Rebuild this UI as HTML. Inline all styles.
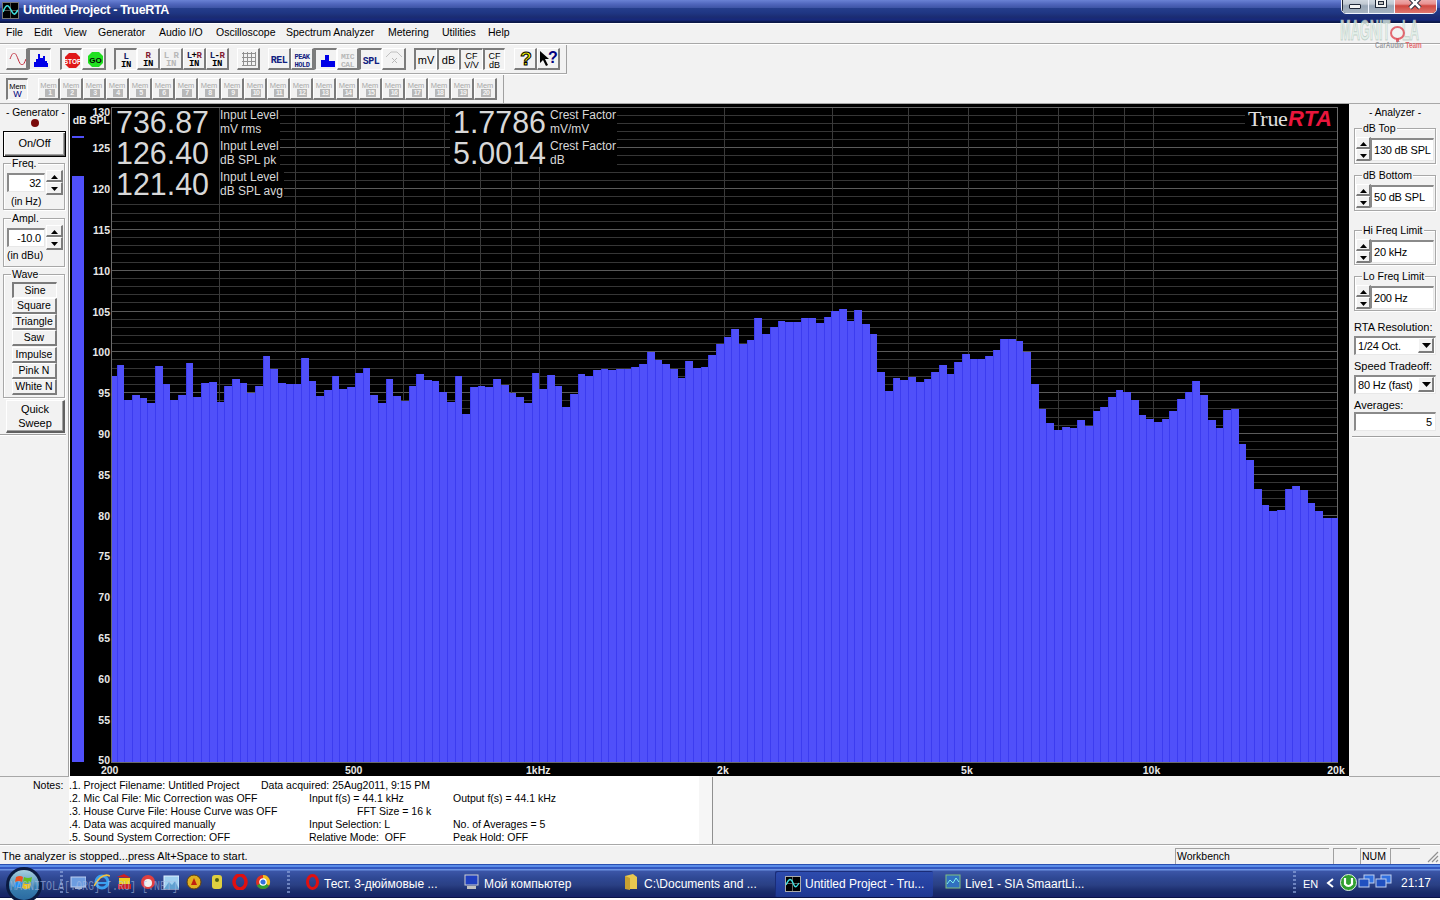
<!DOCTYPE html>
<html><head><meta charset="utf-8">
<style>
*{margin:0;padding:0;box-sizing:border-box}
html,body{width:1440px;height:900px;overflow:hidden;background:#f2f2f2;font-family:"Liberation Sans",sans-serif;font-size:11px;color:#000;position:relative}
.a{position:absolute;white-space:nowrap}
#title{left:0;top:0;width:1440px;height:23px;background:linear-gradient(#6a82d4 0px,#5066bc 4px,#3d54a4 8px,#253e8c 8px,#1f3683 13px,#1b2c72 17px,#16287c 20px,#0c1848 22px,#0c1848 23px)}
#title .t{left:23px;top:3px;color:#fff;font-weight:bold;font-size:12.5px;letter-spacing:-0.33px}
.menu{top:26px;font-size:10.5px}
.hl{position:absolute;height:1px;background:#a0a0a0}
.vl{position:absolute;width:1px;background:#a0a0a0}
.b{position:absolute;box-sizing:border-box;background:#f2f2f2;border-top:1px solid #fff;border-left:1px solid #fff;border-right:2px solid #7c7c7c;border-bottom:2px solid #7c7c7c;text-align:center;overflow:hidden}
.b.d{border-top:2px solid #7c7c7c;border-left:2px solid #7c7c7c;border-right:1px solid #fff;border-bottom:1px solid #fff}
.tb{font-family:"Liberation Mono",monospace;font-weight:bold;font-size:9px;line-height:8px;letter-spacing:-0.5px}
.mem{color:#b4b4b4;font-size:9px;line-height:9px;font-family:"Liberation Sans",sans-serif}
.mem .n{display:inline-block;border:1px solid #b4b4b4;font-size:8px;line-height:7px;padding:0 1px;margin-top:1px;font-weight:bold}
.yl{position:absolute;left:80px;width:30px;text-align:right;color:#e8e8e8;font-weight:bold;font-size:10.5px;line-height:12px}
.xl{position:absolute;top:764px;width:60px;text-align:center;color:#e8e8e8;font-weight:bold;font-size:10.5px;line-height:12px}
.big{position:absolute;color:#d8d8d8;font-size:31px;line-height:30px;transform:scaleX(0.98);transform-origin:left top}
.sm{position:absolute;color:#d8d8d8;font-size:12px;line-height:14px;background:#000;padding-right:1px;padding-bottom:2px}

.grp{position:absolute;border:1px solid #a8a8a8;box-shadow:inset 1px 1px 0 #fff,1px 1px 0 #fff}
.glab{position:absolute;background:#f2f2f2;padding:0 1px;font-size:10.5px;line-height:12px}
.edit{position:absolute;white-space:nowrap;overflow:hidden;background:#fff;border-top:2px solid #8a8a8a;border-left:2px solid #8a8a8a;border-bottom:1px solid #e8e8e8;border-right:1px solid #e8e8e8;font-size:11px;letter-spacing:-0.2px;line-height:16px;padding:0 3px}
.spin{position:absolute;background:#f2f2f2}
.wb{position:absolute;left:12px;width:45px;height:16px;font-size:10.5px;line-height:13px;text-align:center;background:#f2f2f2;border-top:1px solid #fff;border-left:1px solid #fff;border-right:2px solid #7c7c7c;border-bottom:2px solid #7c7c7c}
.wb.d{border-top:2px solid #7c7c7c;border-left:2px solid #7c7c7c;border-right:1px solid #fff;border-bottom:1px solid #fff}
.note{position:absolute;font-size:10.5px;line-height:13px}
#task{left:0;top:864px;width:1440px;height:34px;background:linear-gradient(#2a50b0 0px,#2a50b0 1px,#5a8ce8 1px,#5a8ce8 3.5px,#3358c0 3.5px,#3358c0 5px,#6a90e0 5px,#6a90e0 6px,#3c56a8 7px,#2f4894 14px,#2a4084 21px,#1e3070 26px,#172a68 29px,#182268 33px,#0a1448 33px,#0a1448 34px)}
.tt{position:absolute;color:#fff;font-size:12px;top:876.5px}
</style></head><body>
<!-- TITLE BAR -->
<div class="a" id="title">
 <div class="a" style="left:2px;top:2px;width:17px;height:17px;background:#000;border:1px solid #777">
  <div class="a" style="left:7px;top:0;width:1px;height:15px;background:#555"></div>
  <div class="a" style="left:0;top:7px;width:15px;height:1px;background:#555"></div>
  <svg class="a" style="left:0;top:0" width="15" height="15"><path d="M0,9 C3,1 5,1 8,7 S12,12 15,7" stroke="#40e0e0" stroke-width="1.6" fill="none"/></svg>
 </div>
 <div class="a t">Untitled Project - TrueRTA</div>
 <!-- caption buttons -->
 <div class="a" style="left:1341px;top:-3px;width:96px;height:17px;border:1px solid #f0f4ff;border-radius:0 0 5px 5px;background:#1a2030;overflow:hidden">
  <div class="a" style="left:1px;top:0;width:25px;height:15px;background:linear-gradient(#d8e0e8 0%,#c0c8d2 40%,#98a6b6 52%,#a8b4c2 100%)"></div>
  <div class="a" style="left:27px;top:0;width:25px;height:15px;background:linear-gradient(#d8e0e8 0%,#c0c8d2 40%,#98a6b6 52%,#a8b4c2 100%)"></div>
  <div class="a" style="left:26px;top:0;width:1px;height:15px;background:#f0f4ff"></div>
  <div class="a" style="left:52px;top:0;width:1px;height:15px;background:#f0f4ff"></div>
  <div class="a" style="left:53px;top:0;width:41px;height:15px;background:linear-gradient(#f0b8b8 0%,#e89090 40%,#d04840 52%,#e07870 100%)"></div>
  <div class="a" style="left:7px;top:6px;width:12px;height:5px;border:1px solid #202838;background:#f4f4f4;border-radius:1px"></div>
  <div class="a" style="left:33px;top:0px;width:12px;height:10px;border:1px solid #202838;background:#f4f4f4"><div class="a" style="left:2px;top:2px;width:6px;height:4px;border:1px solid #202838;background:#c0c0c0"></div></div>
  <svg class="a" style="left:65px;top:0" width="16" height="12"><path d="M3,0 L13,10 M13,0 L3,10" stroke="#202838" stroke-width="4.5"/><path d="M3,0 L13,10 M13,0 L3,10" stroke="#fff" stroke-width="2.5"/></svg>
 </div>
</div>
<!-- MENU -->
<div class="a menu" style="left:6px">File</div>
<div class="a menu" style="left:34px">Edit</div>
<div class="a menu" style="left:64px">View</div>
<div class="a menu" style="left:98px">Generator</div>
<div class="a menu" style="left:159px">Audio I/O</div>
<div class="a menu" style="left:216px">Oscilloscope</div>
<div class="a menu" style="left:286px">Spectrum Analyzer</div>
<div class="a menu" style="left:388px">Metering</div>
<div class="a menu" style="left:442px">Utilities</div>
<div class="a menu" style="left:488px">Help</div>
<div class="hl" style="left:0;top:23px;width:1440px;background:#fff"></div>
<div class="hl" style="left:0;top:43px;width:1440px;background:#a8a8a8"></div>
<div class="hl" style="left:0;top:44px;width:1440px;background:#fff"></div>
<!-- watermark logo -->
<div class="a" style="left:1340px;top:15px;font-size:29px;line-height:30px;font-weight:bold;color:rgba(225,240,232,0.8);-webkit-text-stroke:1px rgba(160,180,170,0.55);transform:scaleX(0.44);transform-origin:left top">MAGNIT</div>
<div class="a" style="left:1402px;top:15px;font-size:29px;line-height:30px;font-weight:bold;color:rgba(225,240,232,0.8);-webkit-text-stroke:1px rgba(160,180,170,0.55);transform:scaleX(0.44);transform-origin:left top">LA</div>
<div class="a" style="left:1390px;top:26px;width:15px;height:14px;border:2px solid rgba(225,80,90,0.85);border-radius:50%"></div>
<div class="a" style="left:1396px;top:38px;width:3px;height:4px;background:rgba(225,80,90,0.85)"></div>
<div class="a" style="left:1375px;top:41px;font-size:8.5px;line-height:9px;font-weight:bold;color:rgba(140,140,145,0.85);transform:scaleX(0.75);transform-origin:left top">CarAudio <span style="color:rgba(225,90,95,0.9)">Team</span></div>
<div class="b" style="left:6px;top:48px;width:22px;height:22px"><svg style="position:absolute;left:2px;top:4px" width="18" height="12"><path d="M1,6 C4,-2 6,-2 9,6 S14,14 17,6" stroke="#c02838" stroke-width="1" fill="none"/></svg></div>
<div class="b d" style="left:28px;top:48px;width:23px;height:22px"><svg style="position:absolute;left:2px;top:3px" width="18" height="15"><path d="M2,14 L2,9 L4,9 L4,6 L6,6 L6,1 L8,1 L8,5 L11,5 L11,3 L13,3 L13,8 L15,8 L15,10 L16,10 L16,14 Z" fill="#0000e8"/></svg></div>
<div class="b d" style="left:60px;top:48px;width:22px;height:22px"><svg style="position:absolute;left:2px;top:2px" width="17" height="17"><path d="M5,1 L12,1 L16,5 L16,12 L12,16 L5,16 L1,12 L1,5 Z" fill="#e01818"/><text x="8.5" y="11.5" text-anchor="middle" font-size="6.5" font-weight="bold" fill="#fff" font-family="Liberation Sans">STOP</text></svg></div>
<div class="b" style="left:82px;top:48px;width:24px;height:22px"><svg style="position:absolute;left:4px;top:2px" width="17" height="17"><path d="M5,1 L12,1 L16,5 L16,12 L12,16 L5,16 L1,12 L1,5 Z" fill="#20e020"/><text x="8.5" y="12" text-anchor="middle" font-size="8" font-weight="bold" fill="#000" font-family="Liberation Sans">GO</text></svg></div>
<div class="b d" style="left:114px;top:48px;width:23px;height:22px"><div class="tb" style="position:absolute;left:0;right:0;top:3px;color:#102060">L</div><div class="tb" style="position:absolute;left:0;right:0;top:11px;color:#000">IN</div></div>
<div class="b" style="left:137px;top:48px;width:23px;height:22px"><div class="tb" style="position:absolute;left:0;right:0;top:3px;color:#801830">R</div><div class="tb" style="position:absolute;left:0;right:0;top:11px;color:#000">IN</div></div>
<div class="b" style="left:160px;top:48px;width:23px;height:22px"><div class="tb" style="position:absolute;left:0;right:0;top:3px;color:#b8b8b8">L&nbsp;R</div><div class="tb" style="position:absolute;left:0;right:0;top:11px;color:#b8b8b8">IN</div></div>
<div class="b" style="left:183px;top:48px;width:23px;height:22px"><div class="tb" style="position:absolute;left:0;right:0;top:3px;color:#000"><span style="color:#102060">L</span>+<span style="color:#801830">R</span></div><div class="tb" style="position:absolute;left:0;right:0;top:11px;color:#000">IN</div></div>
<div class="b" style="left:206px;top:48px;width:23px;height:22px"><div class="tb" style="position:absolute;left:0;right:0;top:3px;color:#000"><span style="color:#102060">L</span>-<span style="color:#801830">R</span></div><div class="tb" style="position:absolute;left:0;right:0;top:11px;color:#000">IN</div></div>
<div class="b" style="left:237px;top:48px;width:23px;height:22px"><svg style="position:absolute;left:3px;top:2px" width="16" height="16"><line x1="2.5" y1="1" x2="2.5" y2="15" stroke="#909090"/><line x1="1" y1="2.5" x2="15" y2="2.5" stroke="#909090"/><line x1="6.5" y1="1" x2="6.5" y2="15" stroke="#909090"/><line x1="1" y1="6.5" x2="15" y2="6.5" stroke="#909090"/><line x1="10.5" y1="1" x2="10.5" y2="15" stroke="#909090"/><line x1="1" y1="10.5" x2="15" y2="10.5" stroke="#909090"/><line x1="14.5" y1="1" x2="14.5" y2="15" stroke="#909090"/><line x1="1" y1="14.5" x2="15" y2="14.5" stroke="#909090"/></svg></div>
<div class="b" style="left:268px;top:48px;width:23px;height:22px"><div class="tb" style="position:absolute;left:0;right:0;top:7px;color:#102080;font-size:10px;line-height:10px">REL</div></div>
<div class="b" style="left:291px;top:48px;width:23px;height:22px"><div class="tb" style="position:absolute;left:0;right:0;top:4px;color:#102080;font-size:7px;line-height:8px">PEAK<br>HOLD</div></div>
<div class="b d" style="left:314px;top:48px;width:23px;height:22px"><svg style="position:absolute;left:2px;top:4px" width="18" height="14"><path d="M3,13 L3,6 L7,6 L7,1 L11,1 L11,7 L17,7 L17,13 Z" fill="#0000e8"/></svg></div>
<div class="b" style="left:337px;top:48px;width:22px;height:22px"><div class="tb" style="position:absolute;left:0;right:0;top:4px;color:#b8b8b8;font-size:8px;line-height:8px">MIC<br>CAL</div></div>
<div class="b d" style="left:359px;top:48px;width:23px;height:22px"><div class="tb" style="position:absolute;left:0;right:0;top:7px;color:#102080;font-size:10px;line-height:10px">SPL</div></div>
<div class="b" style="left:382px;top:48px;width:24px;height:22px"><svg style="position:absolute;left:2px;top:2px" width="18" height="16"><path d="M1,6 L6,1 L12,1 L17,6" stroke="#c0c0c0" fill="none"/><path d="M7,7 L12,12 M12,7 L7,12" stroke="#b8b8b8" fill="none"/></svg></div>
<div class="b d" style="left:414px;top:48px;width:23px;height:22px"><div style="position:absolute;left:0;right:0;top:4px;font-size:11px;line-height:12px;color:#000">mV</div></div>
<div class="b d" style="left:437px;top:48px;width:22px;height:22px"><div style="position:absolute;left:0;right:0;top:4px;font-size:11px;line-height:12px;color:#000">dB</div></div>
<div class="b d" style="left:459px;top:48px;width:24px;height:22px"><div style="position:absolute;left:0;right:0;top:2px;font-size:9px;line-height:8.5px;color:#000">CF<br>V/V</div></div>
<div class="b d" style="left:483px;top:48px;width:22px;height:22px"><div style="position:absolute;left:0;right:0;top:2px;font-size:9px;line-height:8.5px;color:#000">CF<br>dB</div></div>
<div class="b" style="left:514px;top:48px;width:23px;height:22px"><svg style="position:absolute;left:3px;top:0px" width="16" height="19"><text x="8" y="16" text-anchor="middle" font-size="19" font-weight="bold" fill="#f0f000" stroke="#000" stroke-width="1" font-family="Liberation Sans">?</text></svg></div>
<div class="b" style="left:537px;top:48px;width:23px;height:22px"><svg style="position:absolute;left:1px;top:1px" width="20" height="18"><path d="M1,1 L1,13 L4,10 L7,16 L9,15 L6,9 L10,9 Z" fill="#000"/><text x="14" y="13" text-anchor="middle" font-size="16" font-weight="bold" fill="#000080" font-family="Liberation Sans">?</text></svg></div>
<div class="vl" style="left:566px;top:45px;height:29px;background:#a0a0a0"></div>
<div class="hl" style="left:0;top:73px;width:567px;background:#a8a8a8"></div>
<div class="hl" style="left:0;top:74px;width:567px;background:#fff"></div>
<div class="b d" style="left:6px;top:78px;width:22px;height:22px"><div style="position:absolute;left:0;right:0;top:2px;color:#000;font-size:7.5px;line-height:9px">Mem</div><div style="position:absolute;left:0;right:0;top:10px;color:#000080;font-size:9px;line-height:9px">W</div></div>
<div class="b" style="left:38px;top:78px;width:22px;height:22px"><div style="position:absolute;left:0;right:0;top:2px;color:#a8a8a8;font-size:7.5px;line-height:9px">Mem</div><div style="position:absolute;left:6px;top:10px;width:10px;height:8px;background:#b8b8b8;color:#f4f4f4;font-size:7px;line-height:8px;text-align:center;font-weight:bold;letter-spacing:-0.6px">1</div></div>
<div class="b" style="left:60px;top:78px;width:23px;height:22px"><div style="position:absolute;left:0;right:0;top:2px;color:#a8a8a8;font-size:7.5px;line-height:9px">Mem</div><div style="position:absolute;left:6px;top:10px;width:10px;height:8px;background:#b8b8b8;color:#f4f4f4;font-size:7px;line-height:8px;text-align:center;font-weight:bold;letter-spacing:-0.6px">2</div></div>
<div class="b" style="left:83px;top:78px;width:23px;height:22px"><div style="position:absolute;left:0;right:0;top:2px;color:#a8a8a8;font-size:7.5px;line-height:9px">Mem</div><div style="position:absolute;left:6px;top:10px;width:10px;height:8px;background:#b8b8b8;color:#f4f4f4;font-size:7px;line-height:8px;text-align:center;font-weight:bold;letter-spacing:-0.6px">3</div></div>
<div class="b" style="left:106px;top:78px;width:23px;height:22px"><div style="position:absolute;left:0;right:0;top:2px;color:#a8a8a8;font-size:7.5px;line-height:9px">Mem</div><div style="position:absolute;left:6px;top:10px;width:10px;height:8px;background:#b8b8b8;color:#f4f4f4;font-size:7px;line-height:8px;text-align:center;font-weight:bold;letter-spacing:-0.6px">4</div></div>
<div class="b" style="left:129px;top:78px;width:23px;height:22px"><div style="position:absolute;left:0;right:0;top:2px;color:#a8a8a8;font-size:7.5px;line-height:9px">Mem</div><div style="position:absolute;left:6px;top:10px;width:10px;height:8px;background:#b8b8b8;color:#f4f4f4;font-size:7px;line-height:8px;text-align:center;font-weight:bold;letter-spacing:-0.6px">5</div></div>
<div class="b" style="left:152px;top:78px;width:23px;height:22px"><div style="position:absolute;left:0;right:0;top:2px;color:#a8a8a8;font-size:7.5px;line-height:9px">Mem</div><div style="position:absolute;left:6px;top:10px;width:10px;height:8px;background:#b8b8b8;color:#f4f4f4;font-size:7px;line-height:8px;text-align:center;font-weight:bold;letter-spacing:-0.6px">6</div></div>
<div class="b" style="left:175px;top:78px;width:23px;height:22px"><div style="position:absolute;left:0;right:0;top:2px;color:#a8a8a8;font-size:7.5px;line-height:9px">Mem</div><div style="position:absolute;left:6px;top:10px;width:10px;height:8px;background:#b8b8b8;color:#f4f4f4;font-size:7px;line-height:8px;text-align:center;font-weight:bold;letter-spacing:-0.6px">7</div></div>
<div class="b" style="left:198px;top:78px;width:23px;height:22px"><div style="position:absolute;left:0;right:0;top:2px;color:#a8a8a8;font-size:7.5px;line-height:9px">Mem</div><div style="position:absolute;left:6px;top:10px;width:10px;height:8px;background:#b8b8b8;color:#f4f4f4;font-size:7px;line-height:8px;text-align:center;font-weight:bold;letter-spacing:-0.6px">8</div></div>
<div class="b" style="left:221px;top:78px;width:23px;height:22px"><div style="position:absolute;left:0;right:0;top:2px;color:#a8a8a8;font-size:7.5px;line-height:9px">Mem</div><div style="position:absolute;left:6px;top:10px;width:10px;height:8px;background:#b8b8b8;color:#f4f4f4;font-size:7px;line-height:8px;text-align:center;font-weight:bold;letter-spacing:-0.6px">9</div></div>
<div class="b" style="left:244px;top:78px;width:23px;height:22px"><div style="position:absolute;left:0;right:0;top:2px;color:#a8a8a8;font-size:7.5px;line-height:9px">Mem</div><div style="position:absolute;left:6px;top:10px;width:10px;height:8px;background:#b8b8b8;color:#f4f4f4;font-size:7px;line-height:8px;text-align:center;font-weight:bold;letter-spacing:-0.6px">10</div></div>
<div class="b" style="left:267px;top:78px;width:23px;height:22px"><div style="position:absolute;left:0;right:0;top:2px;color:#a8a8a8;font-size:7.5px;line-height:9px">Mem</div><div style="position:absolute;left:6px;top:10px;width:10px;height:8px;background:#b8b8b8;color:#f4f4f4;font-size:7px;line-height:8px;text-align:center;font-weight:bold;letter-spacing:-0.6px">11</div></div>
<div class="b" style="left:290px;top:78px;width:23px;height:22px"><div style="position:absolute;left:0;right:0;top:2px;color:#a8a8a8;font-size:7.5px;line-height:9px">Mem</div><div style="position:absolute;left:6px;top:10px;width:10px;height:8px;background:#b8b8b8;color:#f4f4f4;font-size:7px;line-height:8px;text-align:center;font-weight:bold;letter-spacing:-0.6px">12</div></div>
<div class="b" style="left:313px;top:78px;width:23px;height:22px"><div style="position:absolute;left:0;right:0;top:2px;color:#a8a8a8;font-size:7.5px;line-height:9px">Mem</div><div style="position:absolute;left:6px;top:10px;width:10px;height:8px;background:#b8b8b8;color:#f4f4f4;font-size:7px;line-height:8px;text-align:center;font-weight:bold;letter-spacing:-0.6px">13</div></div>
<div class="b" style="left:336px;top:78px;width:23px;height:22px"><div style="position:absolute;left:0;right:0;top:2px;color:#a8a8a8;font-size:7.5px;line-height:9px">Mem</div><div style="position:absolute;left:6px;top:10px;width:10px;height:8px;background:#b8b8b8;color:#f4f4f4;font-size:7px;line-height:8px;text-align:center;font-weight:bold;letter-spacing:-0.6px">14</div></div>
<div class="b" style="left:359px;top:78px;width:23px;height:22px"><div style="position:absolute;left:0;right:0;top:2px;color:#a8a8a8;font-size:7.5px;line-height:9px">Mem</div><div style="position:absolute;left:6px;top:10px;width:10px;height:8px;background:#b8b8b8;color:#f4f4f4;font-size:7px;line-height:8px;text-align:center;font-weight:bold;letter-spacing:-0.6px">15</div></div>
<div class="b" style="left:382px;top:78px;width:23px;height:22px"><div style="position:absolute;left:0;right:0;top:2px;color:#a8a8a8;font-size:7.5px;line-height:9px">Mem</div><div style="position:absolute;left:6px;top:10px;width:10px;height:8px;background:#b8b8b8;color:#f4f4f4;font-size:7px;line-height:8px;text-align:center;font-weight:bold;letter-spacing:-0.6px">16</div></div>
<div class="b" style="left:405px;top:78px;width:23px;height:22px"><div style="position:absolute;left:0;right:0;top:2px;color:#a8a8a8;font-size:7.5px;line-height:9px">Mem</div><div style="position:absolute;left:6px;top:10px;width:10px;height:8px;background:#b8b8b8;color:#f4f4f4;font-size:7px;line-height:8px;text-align:center;font-weight:bold;letter-spacing:-0.6px">17</div></div>
<div class="b" style="left:428px;top:78px;width:23px;height:22px"><div style="position:absolute;left:0;right:0;top:2px;color:#a8a8a8;font-size:7.5px;line-height:9px">Mem</div><div style="position:absolute;left:6px;top:10px;width:10px;height:8px;background:#b8b8b8;color:#f4f4f4;font-size:7px;line-height:8px;text-align:center;font-weight:bold;letter-spacing:-0.6px">18</div></div>
<div class="b" style="left:451px;top:78px;width:23px;height:22px"><div style="position:absolute;left:0;right:0;top:2px;color:#a8a8a8;font-size:7.5px;line-height:9px">Mem</div><div style="position:absolute;left:6px;top:10px;width:10px;height:8px;background:#b8b8b8;color:#f4f4f4;font-size:7px;line-height:8px;text-align:center;font-weight:bold;letter-spacing:-0.6px">19</div></div>
<div class="b" style="left:474px;top:78px;width:23px;height:22px"><div style="position:absolute;left:0;right:0;top:2px;color:#a8a8a8;font-size:7.5px;line-height:9px">Mem</div><div style="position:absolute;left:6px;top:10px;width:10px;height:8px;background:#b8b8b8;color:#f4f4f4;font-size:7px;line-height:8px;text-align:center;font-weight:bold;letter-spacing:-0.6px">20</div></div>
<div class="vl" style="left:503px;top:75px;height:28px;background:#a0a0a0"></div>
<div class="hl" style="left:0;top:103px;width:1440px;background:#a8a8a8"></div>
<!-- CHART -->
<svg class="a" style="left:0;top:0" width="1440" height="900">
<rect x="70" y="104" width="1279" height="672" fill="#000"/>
<line x1="111" y1="107.5" x2="1338" y2="107.5" stroke="#5a5a5a" stroke-width="1"/>
<line x1="111" y1="115.5" x2="1338" y2="115.5" stroke="#363636" stroke-width="1"/>
<line x1="111" y1="123.5" x2="1338" y2="123.5" stroke="#363636" stroke-width="1"/>
<line x1="111" y1="131.5" x2="1338" y2="131.5" stroke="#363636" stroke-width="1"/>
<line x1="111" y1="139.5" x2="1338" y2="139.5" stroke="#363636" stroke-width="1"/>
<line x1="111" y1="147.5" x2="1338" y2="147.5" stroke="#5a5a5a" stroke-width="1"/>
<line x1="111" y1="155.5" x2="1338" y2="155.5" stroke="#363636" stroke-width="1"/>
<line x1="111" y1="164.5" x2="1338" y2="164.5" stroke="#363636" stroke-width="1"/>
<line x1="111" y1="172.5" x2="1338" y2="172.5" stroke="#363636" stroke-width="1"/>
<line x1="111" y1="180.5" x2="1338" y2="180.5" stroke="#363636" stroke-width="1"/>
<line x1="111" y1="188.5" x2="1338" y2="188.5" stroke="#5a5a5a" stroke-width="1"/>
<line x1="111" y1="196.5" x2="1338" y2="196.5" stroke="#363636" stroke-width="1"/>
<line x1="111" y1="204.5" x2="1338" y2="204.5" stroke="#363636" stroke-width="1"/>
<line x1="111" y1="213.5" x2="1338" y2="213.5" stroke="#363636" stroke-width="1"/>
<line x1="111" y1="221.5" x2="1338" y2="221.5" stroke="#363636" stroke-width="1"/>
<line x1="111" y1="229.5" x2="1338" y2="229.5" stroke="#5a5a5a" stroke-width="1"/>
<line x1="111" y1="237.5" x2="1338" y2="237.5" stroke="#363636" stroke-width="1"/>
<line x1="111" y1="245.5" x2="1338" y2="245.5" stroke="#363636" stroke-width="1"/>
<line x1="111" y1="253.5" x2="1338" y2="253.5" stroke="#363636" stroke-width="1"/>
<line x1="111" y1="262.5" x2="1338" y2="262.5" stroke="#363636" stroke-width="1"/>
<line x1="111" y1="270.5" x2="1338" y2="270.5" stroke="#5a5a5a" stroke-width="1"/>
<line x1="111" y1="278.5" x2="1338" y2="278.5" stroke="#363636" stroke-width="1"/>
<line x1="111" y1="286.5" x2="1338" y2="286.5" stroke="#363636" stroke-width="1"/>
<line x1="111" y1="294.5" x2="1338" y2="294.5" stroke="#363636" stroke-width="1"/>
<line x1="111" y1="302.5" x2="1338" y2="302.5" stroke="#363636" stroke-width="1"/>
<line x1="111" y1="311.5" x2="1338" y2="311.5" stroke="#5a5a5a" stroke-width="1"/>
<line x1="111" y1="319.5" x2="1338" y2="319.5" stroke="#363636" stroke-width="1"/>
<line x1="111" y1="327.5" x2="1338" y2="327.5" stroke="#363636" stroke-width="1"/>
<line x1="111" y1="335.5" x2="1338" y2="335.5" stroke="#363636" stroke-width="1"/>
<line x1="111" y1="343.5" x2="1338" y2="343.5" stroke="#363636" stroke-width="1"/>
<line x1="111" y1="351.5" x2="1338" y2="351.5" stroke="#5a5a5a" stroke-width="1"/>
<line x1="111" y1="359.5" x2="1338" y2="359.5" stroke="#363636" stroke-width="1"/>
<line x1="111" y1="368.5" x2="1338" y2="368.5" stroke="#363636" stroke-width="1"/>
<line x1="111" y1="376.5" x2="1338" y2="376.5" stroke="#363636" stroke-width="1"/>
<line x1="111" y1="384.5" x2="1338" y2="384.5" stroke="#363636" stroke-width="1"/>
<line x1="111" y1="392.5" x2="1338" y2="392.5" stroke="#5a5a5a" stroke-width="1"/>
<line x1="111" y1="400.5" x2="1338" y2="400.5" stroke="#363636" stroke-width="1"/>
<line x1="111" y1="408.5" x2="1338" y2="408.5" stroke="#363636" stroke-width="1"/>
<line x1="111" y1="417.5" x2="1338" y2="417.5" stroke="#363636" stroke-width="1"/>
<line x1="111" y1="425.5" x2="1338" y2="425.5" stroke="#363636" stroke-width="1"/>
<line x1="111" y1="433.5" x2="1338" y2="433.5" stroke="#5a5a5a" stroke-width="1"/>
<line x1="111" y1="441.5" x2="1338" y2="441.5" stroke="#363636" stroke-width="1"/>
<line x1="111" y1="449.5" x2="1338" y2="449.5" stroke="#363636" stroke-width="1"/>
<line x1="111" y1="457.5" x2="1338" y2="457.5" stroke="#363636" stroke-width="1"/>
<line x1="111" y1="466.5" x2="1338" y2="466.5" stroke="#363636" stroke-width="1"/>
<line x1="111" y1="474.5" x2="1338" y2="474.5" stroke="#5a5a5a" stroke-width="1"/>
<line x1="111" y1="482.5" x2="1338" y2="482.5" stroke="#363636" stroke-width="1"/>
<line x1="111" y1="490.5" x2="1338" y2="490.5" stroke="#363636" stroke-width="1"/>
<line x1="111" y1="498.5" x2="1338" y2="498.5" stroke="#363636" stroke-width="1"/>
<line x1="111" y1="506.5" x2="1338" y2="506.5" stroke="#363636" stroke-width="1"/>
<line x1="111" y1="515.5" x2="1338" y2="515.5" stroke="#5a5a5a" stroke-width="1"/>
<line x1="111" y1="523.5" x2="1338" y2="523.5" stroke="#363636" stroke-width="1"/>
<line x1="111" y1="531.5" x2="1338" y2="531.5" stroke="#363636" stroke-width="1"/>
<line x1="111" y1="539.5" x2="1338" y2="539.5" stroke="#363636" stroke-width="1"/>
<line x1="111" y1="547.5" x2="1338" y2="547.5" stroke="#363636" stroke-width="1"/>
<line x1="111" y1="555.5" x2="1338" y2="555.5" stroke="#5a5a5a" stroke-width="1"/>
<line x1="111" y1="563.5" x2="1338" y2="563.5" stroke="#363636" stroke-width="1"/>
<line x1="111" y1="572.5" x2="1338" y2="572.5" stroke="#363636" stroke-width="1"/>
<line x1="111" y1="580.5" x2="1338" y2="580.5" stroke="#363636" stroke-width="1"/>
<line x1="111" y1="588.5" x2="1338" y2="588.5" stroke="#363636" stroke-width="1"/>
<line x1="111" y1="596.5" x2="1338" y2="596.5" stroke="#5a5a5a" stroke-width="1"/>
<line x1="111" y1="604.5" x2="1338" y2="604.5" stroke="#363636" stroke-width="1"/>
<line x1="111" y1="612.5" x2="1338" y2="612.5" stroke="#363636" stroke-width="1"/>
<line x1="111" y1="621.5" x2="1338" y2="621.5" stroke="#363636" stroke-width="1"/>
<line x1="111" y1="629.5" x2="1338" y2="629.5" stroke="#363636" stroke-width="1"/>
<line x1="111" y1="637.5" x2="1338" y2="637.5" stroke="#5a5a5a" stroke-width="1"/>
<line x1="111" y1="645.5" x2="1338" y2="645.5" stroke="#363636" stroke-width="1"/>
<line x1="111" y1="653.5" x2="1338" y2="653.5" stroke="#363636" stroke-width="1"/>
<line x1="111" y1="661.5" x2="1338" y2="661.5" stroke="#363636" stroke-width="1"/>
<line x1="111" y1="670.5" x2="1338" y2="670.5" stroke="#363636" stroke-width="1"/>
<line x1="111" y1="678.5" x2="1338" y2="678.5" stroke="#5a5a5a" stroke-width="1"/>
<line x1="111" y1="686.5" x2="1338" y2="686.5" stroke="#363636" stroke-width="1"/>
<line x1="111" y1="694.5" x2="1338" y2="694.5" stroke="#363636" stroke-width="1"/>
<line x1="111" y1="702.5" x2="1338" y2="702.5" stroke="#363636" stroke-width="1"/>
<line x1="111" y1="710.5" x2="1338" y2="710.5" stroke="#363636" stroke-width="1"/>
<line x1="111" y1="719.5" x2="1338" y2="719.5" stroke="#5a5a5a" stroke-width="1"/>
<line x1="111" y1="727.5" x2="1338" y2="727.5" stroke="#363636" stroke-width="1"/>
<line x1="111" y1="735.5" x2="1338" y2="735.5" stroke="#363636" stroke-width="1"/>
<line x1="111" y1="743.5" x2="1338" y2="743.5" stroke="#363636" stroke-width="1"/>
<line x1="111" y1="751.5" x2="1338" y2="751.5" stroke="#363636" stroke-width="1"/>
<line x1="111" y1="759.5" x2="1338" y2="759.5" stroke="#5a5a5a" stroke-width="1"/>
<line x1="219.5" y1="108" x2="219.5" y2="762" stroke="#3a3a3a" stroke-width="1"/>
<line x1="295.5" y1="108" x2="295.5" y2="762" stroke="#3a3a3a" stroke-width="1"/>
<line x1="355.5" y1="108" x2="355.5" y2="762" stroke="#3a3a3a" stroke-width="1"/>
<line x1="403.5" y1="108" x2="403.5" y2="762" stroke="#3a3a3a" stroke-width="1"/>
<line x1="444.5" y1="108" x2="444.5" y2="762" stroke="#3a3a3a" stroke-width="1"/>
<line x1="480.5" y1="108" x2="480.5" y2="762" stroke="#3a3a3a" stroke-width="1"/>
<line x1="511.5" y1="108" x2="511.5" y2="762" stroke="#3a3a3a" stroke-width="1"/>
<line x1="539.5" y1="108" x2="539.5" y2="762" stroke="#3a3a3a" stroke-width="1"/>
<line x1="724.5" y1="108" x2="724.5" y2="762" stroke="#3a3a3a" stroke-width="1"/>
<line x1="832.5" y1="108" x2="832.5" y2="762" stroke="#3a3a3a" stroke-width="1"/>
<line x1="908.5" y1="108" x2="908.5" y2="762" stroke="#3a3a3a" stroke-width="1"/>
<line x1="968.5" y1="108" x2="968.5" y2="762" stroke="#3a3a3a" stroke-width="1"/>
<line x1="1016.5" y1="108" x2="1016.5" y2="762" stroke="#3a3a3a" stroke-width="1"/>
<line x1="1058.5" y1="108" x2="1058.5" y2="762" stroke="#3a3a3a" stroke-width="1"/>
<line x1="1093.5" y1="108" x2="1093.5" y2="762" stroke="#3a3a3a" stroke-width="1"/>
<line x1="1124.5" y1="108" x2="1124.5" y2="762" stroke="#3a3a3a" stroke-width="1"/>
<line x1="1153.5" y1="108" x2="1153.5" y2="762" stroke="#3a3a3a" stroke-width="1"/>
<rect x="111.5" y="107.5" width="1226" height="655" fill="none" stroke="#6a6a6a" stroke-width="1"/>
<rect x="112" y="376" width="5" height="386" fill="#5050fa"/>
<rect x="117" y="365" width="7" height="397" fill="#5050fa"/>
<rect x="117" y="365" width="1" height="397" fill="#3c3cf0"/>
<rect x="124" y="400" width="8" height="362" fill="#5050fa"/>
<rect x="124" y="400" width="1" height="362" fill="#3c3cf0"/>
<rect x="132" y="395" width="8" height="367" fill="#5050fa"/>
<rect x="132" y="395" width="1" height="367" fill="#3c3cf0"/>
<rect x="140" y="398" width="7" height="364" fill="#5050fa"/>
<rect x="140" y="398" width="1" height="364" fill="#3c3cf0"/>
<rect x="147" y="403" width="8" height="359" fill="#5050fa"/>
<rect x="147" y="403" width="1" height="359" fill="#3c3cf0"/>
<rect x="155" y="366" width="8" height="396" fill="#5050fa"/>
<rect x="155" y="366" width="1" height="396" fill="#3c3cf0"/>
<rect x="163" y="384" width="7" height="378" fill="#5050fa"/>
<rect x="163" y="384" width="1" height="378" fill="#3c3cf0"/>
<rect x="170" y="400" width="8" height="362" fill="#5050fa"/>
<rect x="170" y="400" width="1" height="362" fill="#3c3cf0"/>
<rect x="178" y="395" width="8" height="367" fill="#5050fa"/>
<rect x="178" y="395" width="1" height="367" fill="#3c3cf0"/>
<rect x="186" y="363" width="7" height="399" fill="#5050fa"/>
<rect x="186" y="363" width="1" height="399" fill="#3c3cf0"/>
<rect x="193" y="397" width="8" height="365" fill="#5050fa"/>
<rect x="193" y="397" width="1" height="365" fill="#3c3cf0"/>
<rect x="201" y="383" width="8" height="379" fill="#5050fa"/>
<rect x="201" y="383" width="1" height="379" fill="#3c3cf0"/>
<rect x="209" y="382" width="8" height="380" fill="#5050fa"/>
<rect x="209" y="382" width="1" height="380" fill="#3c3cf0"/>
<rect x="217" y="402" width="7" height="360" fill="#5050fa"/>
<rect x="217" y="402" width="1" height="360" fill="#3c3cf0"/>
<rect x="224" y="386" width="8" height="376" fill="#5050fa"/>
<rect x="224" y="386" width="1" height="376" fill="#3c3cf0"/>
<rect x="232" y="379" width="8" height="383" fill="#5050fa"/>
<rect x="232" y="379" width="1" height="383" fill="#3c3cf0"/>
<rect x="240" y="383" width="7" height="379" fill="#5050fa"/>
<rect x="240" y="383" width="1" height="379" fill="#3c3cf0"/>
<rect x="247" y="393" width="8" height="369" fill="#5050fa"/>
<rect x="247" y="393" width="1" height="369" fill="#3c3cf0"/>
<rect x="255" y="386" width="8" height="376" fill="#5050fa"/>
<rect x="255" y="386" width="1" height="376" fill="#3c3cf0"/>
<rect x="263" y="356" width="7" height="406" fill="#5050fa"/>
<rect x="263" y="356" width="1" height="406" fill="#3c3cf0"/>
<rect x="270" y="369" width="8" height="393" fill="#5050fa"/>
<rect x="270" y="369" width="1" height="393" fill="#3c3cf0"/>
<rect x="278" y="383" width="8" height="379" fill="#5050fa"/>
<rect x="278" y="383" width="1" height="379" fill="#3c3cf0"/>
<rect x="286" y="384" width="7" height="378" fill="#5050fa"/>
<rect x="286" y="384" width="1" height="378" fill="#3c3cf0"/>
<rect x="293" y="384" width="8" height="378" fill="#5050fa"/>
<rect x="293" y="384" width="1" height="378" fill="#3c3cf0"/>
<rect x="301" y="358" width="8" height="404" fill="#5050fa"/>
<rect x="301" y="358" width="1" height="404" fill="#3c3cf0"/>
<rect x="309" y="381" width="7" height="381" fill="#5050fa"/>
<rect x="309" y="381" width="1" height="381" fill="#3c3cf0"/>
<rect x="316" y="396" width="8" height="366" fill="#5050fa"/>
<rect x="316" y="396" width="1" height="366" fill="#3c3cf0"/>
<rect x="324" y="390" width="8" height="372" fill="#5050fa"/>
<rect x="324" y="390" width="1" height="372" fill="#3c3cf0"/>
<rect x="332" y="376" width="7" height="386" fill="#5050fa"/>
<rect x="332" y="376" width="1" height="386" fill="#3c3cf0"/>
<rect x="339" y="389" width="8" height="373" fill="#5050fa"/>
<rect x="339" y="389" width="1" height="373" fill="#3c3cf0"/>
<rect x="347" y="387" width="8" height="375" fill="#5050fa"/>
<rect x="347" y="387" width="1" height="375" fill="#3c3cf0"/>
<rect x="355" y="373" width="8" height="389" fill="#5050fa"/>
<rect x="355" y="373" width="1" height="389" fill="#3c3cf0"/>
<rect x="363" y="368" width="7" height="394" fill="#5050fa"/>
<rect x="363" y="368" width="1" height="394" fill="#3c3cf0"/>
<rect x="370" y="395" width="8" height="367" fill="#5050fa"/>
<rect x="370" y="395" width="1" height="367" fill="#3c3cf0"/>
<rect x="378" y="403" width="8" height="359" fill="#5050fa"/>
<rect x="378" y="403" width="1" height="359" fill="#3c3cf0"/>
<rect x="386" y="379" width="7" height="383" fill="#5050fa"/>
<rect x="386" y="379" width="1" height="383" fill="#3c3cf0"/>
<rect x="393" y="396" width="8" height="366" fill="#5050fa"/>
<rect x="393" y="396" width="1" height="366" fill="#3c3cf0"/>
<rect x="401" y="401" width="8" height="361" fill="#5050fa"/>
<rect x="401" y="401" width="1" height="361" fill="#3c3cf0"/>
<rect x="409" y="386" width="7" height="376" fill="#5050fa"/>
<rect x="409" y="386" width="1" height="376" fill="#3c3cf0"/>
<rect x="416" y="374" width="8" height="388" fill="#5050fa"/>
<rect x="416" y="374" width="1" height="388" fill="#3c3cf0"/>
<rect x="424" y="380" width="8" height="382" fill="#5050fa"/>
<rect x="424" y="380" width="1" height="382" fill="#3c3cf0"/>
<rect x="432" y="381" width="7" height="381" fill="#5050fa"/>
<rect x="432" y="381" width="1" height="381" fill="#3c3cf0"/>
<rect x="439" y="392" width="8" height="370" fill="#5050fa"/>
<rect x="439" y="392" width="1" height="370" fill="#3c3cf0"/>
<rect x="447" y="402" width="8" height="360" fill="#5050fa"/>
<rect x="447" y="402" width="1" height="360" fill="#3c3cf0"/>
<rect x="455" y="376" width="7" height="386" fill="#5050fa"/>
<rect x="455" y="376" width="1" height="386" fill="#3c3cf0"/>
<rect x="462" y="414" width="8" height="348" fill="#5050fa"/>
<rect x="462" y="414" width="1" height="348" fill="#3c3cf0"/>
<rect x="470" y="387" width="8" height="375" fill="#5050fa"/>
<rect x="470" y="387" width="1" height="375" fill="#3c3cf0"/>
<rect x="478" y="386" width="7" height="376" fill="#5050fa"/>
<rect x="478" y="386" width="1" height="376" fill="#3c3cf0"/>
<rect x="485" y="387" width="8" height="375" fill="#5050fa"/>
<rect x="485" y="387" width="1" height="375" fill="#3c3cf0"/>
<rect x="493" y="379" width="8" height="383" fill="#5050fa"/>
<rect x="493" y="379" width="1" height="383" fill="#3c3cf0"/>
<rect x="501" y="385" width="8" height="377" fill="#5050fa"/>
<rect x="501" y="385" width="1" height="377" fill="#3c3cf0"/>
<rect x="509" y="393" width="7" height="369" fill="#5050fa"/>
<rect x="509" y="393" width="1" height="369" fill="#3c3cf0"/>
<rect x="516" y="397" width="8" height="365" fill="#5050fa"/>
<rect x="516" y="397" width="1" height="365" fill="#3c3cf0"/>
<rect x="524" y="403" width="8" height="359" fill="#5050fa"/>
<rect x="524" y="403" width="1" height="359" fill="#3c3cf0"/>
<rect x="532" y="373" width="7" height="389" fill="#5050fa"/>
<rect x="532" y="373" width="1" height="389" fill="#3c3cf0"/>
<rect x="539" y="389" width="8" height="373" fill="#5050fa"/>
<rect x="539" y="389" width="1" height="373" fill="#3c3cf0"/>
<rect x="547" y="375" width="8" height="387" fill="#5050fa"/>
<rect x="547" y="375" width="1" height="387" fill="#3c3cf0"/>
<rect x="555" y="386" width="7" height="376" fill="#5050fa"/>
<rect x="555" y="386" width="1" height="376" fill="#3c3cf0"/>
<rect x="562" y="407" width="8" height="355" fill="#5050fa"/>
<rect x="562" y="407" width="1" height="355" fill="#3c3cf0"/>
<rect x="570" y="394" width="8" height="368" fill="#5050fa"/>
<rect x="570" y="394" width="1" height="368" fill="#3c3cf0"/>
<rect x="578" y="374" width="7" height="388" fill="#5050fa"/>
<rect x="578" y="374" width="1" height="388" fill="#3c3cf0"/>
<rect x="585" y="376" width="8" height="386" fill="#5050fa"/>
<rect x="585" y="376" width="1" height="386" fill="#3c3cf0"/>
<rect x="593" y="370" width="8" height="392" fill="#5050fa"/>
<rect x="593" y="370" width="1" height="392" fill="#3c3cf0"/>
<rect x="601" y="369" width="7" height="393" fill="#5050fa"/>
<rect x="601" y="369" width="1" height="393" fill="#3c3cf0"/>
<rect x="608" y="370" width="8" height="392" fill="#5050fa"/>
<rect x="608" y="370" width="1" height="392" fill="#3c3cf0"/>
<rect x="616" y="369" width="8" height="393" fill="#5050fa"/>
<rect x="616" y="369" width="1" height="393" fill="#3c3cf0"/>
<rect x="624" y="369" width="7" height="393" fill="#5050fa"/>
<rect x="624" y="369" width="1" height="393" fill="#3c3cf0"/>
<rect x="631" y="367" width="8" height="395" fill="#5050fa"/>
<rect x="631" y="367" width="1" height="395" fill="#3c3cf0"/>
<rect x="639" y="364" width="8" height="398" fill="#5050fa"/>
<rect x="639" y="364" width="1" height="398" fill="#3c3cf0"/>
<rect x="647" y="352" width="8" height="410" fill="#5050fa"/>
<rect x="647" y="352" width="1" height="410" fill="#3c3cf0"/>
<rect x="655" y="360" width="7" height="402" fill="#5050fa"/>
<rect x="655" y="360" width="1" height="402" fill="#3c3cf0"/>
<rect x="662" y="364" width="8" height="398" fill="#5050fa"/>
<rect x="662" y="364" width="1" height="398" fill="#3c3cf0"/>
<rect x="670" y="369" width="8" height="393" fill="#5050fa"/>
<rect x="670" y="369" width="1" height="393" fill="#3c3cf0"/>
<rect x="678" y="378" width="7" height="384" fill="#5050fa"/>
<rect x="678" y="378" width="1" height="384" fill="#3c3cf0"/>
<rect x="685" y="361" width="8" height="401" fill="#5050fa"/>
<rect x="685" y="361" width="1" height="401" fill="#3c3cf0"/>
<rect x="693" y="368" width="8" height="394" fill="#5050fa"/>
<rect x="693" y="368" width="1" height="394" fill="#3c3cf0"/>
<rect x="701" y="367" width="7" height="395" fill="#5050fa"/>
<rect x="701" y="367" width="1" height="395" fill="#3c3cf0"/>
<rect x="708" y="355" width="8" height="407" fill="#5050fa"/>
<rect x="708" y="355" width="1" height="407" fill="#3c3cf0"/>
<rect x="716" y="344" width="8" height="418" fill="#5050fa"/>
<rect x="716" y="344" width="1" height="418" fill="#3c3cf0"/>
<rect x="724" y="337" width="7" height="425" fill="#5050fa"/>
<rect x="724" y="337" width="1" height="425" fill="#3c3cf0"/>
<rect x="731" y="329" width="8" height="433" fill="#5050fa"/>
<rect x="731" y="329" width="1" height="433" fill="#3c3cf0"/>
<rect x="739" y="344" width="8" height="418" fill="#5050fa"/>
<rect x="739" y="344" width="1" height="418" fill="#3c3cf0"/>
<rect x="747" y="340" width="7" height="422" fill="#5050fa"/>
<rect x="747" y="340" width="1" height="422" fill="#3c3cf0"/>
<rect x="754" y="318" width="8" height="444" fill="#5050fa"/>
<rect x="754" y="318" width="1" height="444" fill="#3c3cf0"/>
<rect x="762" y="334" width="8" height="428" fill="#5050fa"/>
<rect x="762" y="334" width="1" height="428" fill="#3c3cf0"/>
<rect x="770" y="327" width="8" height="435" fill="#5050fa"/>
<rect x="770" y="327" width="1" height="435" fill="#3c3cf0"/>
<rect x="778" y="321" width="7" height="441" fill="#5050fa"/>
<rect x="778" y="321" width="1" height="441" fill="#3c3cf0"/>
<rect x="785" y="322" width="8" height="440" fill="#5050fa"/>
<rect x="785" y="322" width="1" height="440" fill="#3c3cf0"/>
<rect x="793" y="322" width="8" height="440" fill="#5050fa"/>
<rect x="793" y="322" width="1" height="440" fill="#3c3cf0"/>
<rect x="801" y="318" width="7" height="444" fill="#5050fa"/>
<rect x="801" y="318" width="1" height="444" fill="#3c3cf0"/>
<rect x="808" y="318" width="8" height="444" fill="#5050fa"/>
<rect x="808" y="318" width="1" height="444" fill="#3c3cf0"/>
<rect x="816" y="323" width="8" height="439" fill="#5050fa"/>
<rect x="816" y="323" width="1" height="439" fill="#3c3cf0"/>
<rect x="824" y="317" width="7" height="445" fill="#5050fa"/>
<rect x="824" y="317" width="1" height="445" fill="#3c3cf0"/>
<rect x="831" y="311" width="8" height="451" fill="#5050fa"/>
<rect x="831" y="311" width="1" height="451" fill="#3c3cf0"/>
<rect x="839" y="309" width="8" height="453" fill="#5050fa"/>
<rect x="839" y="309" width="1" height="453" fill="#3c3cf0"/>
<rect x="847" y="321" width="7" height="441" fill="#5050fa"/>
<rect x="847" y="321" width="1" height="441" fill="#3c3cf0"/>
<rect x="854" y="310" width="8" height="452" fill="#5050fa"/>
<rect x="854" y="310" width="1" height="452" fill="#3c3cf0"/>
<rect x="862" y="324" width="8" height="438" fill="#5050fa"/>
<rect x="862" y="324" width="1" height="438" fill="#3c3cf0"/>
<rect x="870" y="334" width="7" height="428" fill="#5050fa"/>
<rect x="870" y="334" width="1" height="428" fill="#3c3cf0"/>
<rect x="877" y="372" width="8" height="390" fill="#5050fa"/>
<rect x="877" y="372" width="1" height="390" fill="#3c3cf0"/>
<rect x="885" y="391" width="8" height="371" fill="#5050fa"/>
<rect x="885" y="391" width="1" height="371" fill="#3c3cf0"/>
<rect x="893" y="378" width="7" height="384" fill="#5050fa"/>
<rect x="893" y="378" width="1" height="384" fill="#3c3cf0"/>
<rect x="900" y="380" width="8" height="382" fill="#5050fa"/>
<rect x="900" y="380" width="1" height="382" fill="#3c3cf0"/>
<rect x="908" y="377" width="8" height="385" fill="#5050fa"/>
<rect x="908" y="377" width="1" height="385" fill="#3c3cf0"/>
<rect x="916" y="382" width="8" height="380" fill="#5050fa"/>
<rect x="916" y="382" width="1" height="380" fill="#3c3cf0"/>
<rect x="924" y="379" width="7" height="383" fill="#5050fa"/>
<rect x="924" y="379" width="1" height="383" fill="#3c3cf0"/>
<rect x="931" y="372" width="8" height="390" fill="#5050fa"/>
<rect x="931" y="372" width="1" height="390" fill="#3c3cf0"/>
<rect x="939" y="365" width="8" height="397" fill="#5050fa"/>
<rect x="939" y="365" width="1" height="397" fill="#3c3cf0"/>
<rect x="947" y="374" width="7" height="388" fill="#5050fa"/>
<rect x="947" y="374" width="1" height="388" fill="#3c3cf0"/>
<rect x="954" y="362" width="8" height="400" fill="#5050fa"/>
<rect x="954" y="362" width="1" height="400" fill="#3c3cf0"/>
<rect x="962" y="354" width="8" height="408" fill="#5050fa"/>
<rect x="962" y="354" width="1" height="408" fill="#3c3cf0"/>
<rect x="970" y="359" width="7" height="403" fill="#5050fa"/>
<rect x="970" y="359" width="1" height="403" fill="#3c3cf0"/>
<rect x="977" y="359" width="8" height="403" fill="#5050fa"/>
<rect x="977" y="359" width="1" height="403" fill="#3c3cf0"/>
<rect x="985" y="356" width="8" height="406" fill="#5050fa"/>
<rect x="985" y="356" width="1" height="406" fill="#3c3cf0"/>
<rect x="993" y="350" width="7" height="412" fill="#5050fa"/>
<rect x="993" y="350" width="1" height="412" fill="#3c3cf0"/>
<rect x="1000" y="339" width="8" height="423" fill="#5050fa"/>
<rect x="1000" y="339" width="1" height="423" fill="#3c3cf0"/>
<rect x="1008" y="339" width="8" height="423" fill="#5050fa"/>
<rect x="1008" y="339" width="1" height="423" fill="#3c3cf0"/>
<rect x="1016" y="341" width="7" height="421" fill="#5050fa"/>
<rect x="1016" y="341" width="1" height="421" fill="#3c3cf0"/>
<rect x="1023" y="352" width="8" height="410" fill="#5050fa"/>
<rect x="1023" y="352" width="1" height="410" fill="#3c3cf0"/>
<rect x="1031" y="384" width="8" height="378" fill="#5050fa"/>
<rect x="1031" y="384" width="1" height="378" fill="#3c3cf0"/>
<rect x="1039" y="409" width="7" height="353" fill="#5050fa"/>
<rect x="1039" y="409" width="1" height="353" fill="#3c3cf0"/>
<rect x="1046" y="423" width="8" height="339" fill="#5050fa"/>
<rect x="1046" y="423" width="1" height="339" fill="#3c3cf0"/>
<rect x="1054" y="430" width="8" height="332" fill="#5050fa"/>
<rect x="1054" y="430" width="1" height="332" fill="#3c3cf0"/>
<rect x="1062" y="427" width="8" height="335" fill="#5050fa"/>
<rect x="1062" y="427" width="1" height="335" fill="#3c3cf0"/>
<rect x="1070" y="428" width="7" height="334" fill="#5050fa"/>
<rect x="1070" y="428" width="1" height="334" fill="#3c3cf0"/>
<rect x="1077" y="420" width="8" height="342" fill="#5050fa"/>
<rect x="1077" y="420" width="1" height="342" fill="#3c3cf0"/>
<rect x="1085" y="426" width="8" height="336" fill="#5050fa"/>
<rect x="1085" y="426" width="1" height="336" fill="#3c3cf0"/>
<rect x="1093" y="411" width="7" height="351" fill="#5050fa"/>
<rect x="1093" y="411" width="1" height="351" fill="#3c3cf0"/>
<rect x="1100" y="407" width="8" height="355" fill="#5050fa"/>
<rect x="1100" y="407" width="1" height="355" fill="#3c3cf0"/>
<rect x="1108" y="397" width="8" height="365" fill="#5050fa"/>
<rect x="1108" y="397" width="1" height="365" fill="#3c3cf0"/>
<rect x="1116" y="390" width="7" height="372" fill="#5050fa"/>
<rect x="1116" y="390" width="1" height="372" fill="#3c3cf0"/>
<rect x="1123" y="392" width="8" height="370" fill="#5050fa"/>
<rect x="1123" y="392" width="1" height="370" fill="#3c3cf0"/>
<rect x="1131" y="400" width="8" height="362" fill="#5050fa"/>
<rect x="1131" y="400" width="1" height="362" fill="#3c3cf0"/>
<rect x="1139" y="415" width="7" height="347" fill="#5050fa"/>
<rect x="1139" y="415" width="1" height="347" fill="#3c3cf0"/>
<rect x="1146" y="419" width="8" height="343" fill="#5050fa"/>
<rect x="1146" y="419" width="1" height="343" fill="#3c3cf0"/>
<rect x="1154" y="422" width="8" height="340" fill="#5050fa"/>
<rect x="1154" y="422" width="1" height="340" fill="#3c3cf0"/>
<rect x="1162" y="419" width="7" height="343" fill="#5050fa"/>
<rect x="1162" y="419" width="1" height="343" fill="#3c3cf0"/>
<rect x="1169" y="411" width="8" height="351" fill="#5050fa"/>
<rect x="1169" y="411" width="1" height="351" fill="#3c3cf0"/>
<rect x="1177" y="399" width="8" height="363" fill="#5050fa"/>
<rect x="1177" y="399" width="1" height="363" fill="#3c3cf0"/>
<rect x="1185" y="392" width="7" height="370" fill="#5050fa"/>
<rect x="1185" y="392" width="1" height="370" fill="#3c3cf0"/>
<rect x="1192" y="381" width="8" height="381" fill="#5050fa"/>
<rect x="1192" y="381" width="1" height="381" fill="#3c3cf0"/>
<rect x="1200" y="395" width="8" height="367" fill="#5050fa"/>
<rect x="1200" y="395" width="1" height="367" fill="#3c3cf0"/>
<rect x="1208" y="420" width="8" height="342" fill="#5050fa"/>
<rect x="1208" y="420" width="1" height="342" fill="#3c3cf0"/>
<rect x="1216" y="428" width="7" height="334" fill="#5050fa"/>
<rect x="1216" y="428" width="1" height="334" fill="#3c3cf0"/>
<rect x="1223" y="410" width="8" height="352" fill="#5050fa"/>
<rect x="1223" y="410" width="1" height="352" fill="#3c3cf0"/>
<rect x="1231" y="409" width="8" height="353" fill="#5050fa"/>
<rect x="1231" y="409" width="1" height="353" fill="#3c3cf0"/>
<rect x="1239" y="444" width="7" height="318" fill="#5050fa"/>
<rect x="1239" y="444" width="1" height="318" fill="#3c3cf0"/>
<rect x="1246" y="460" width="8" height="302" fill="#5050fa"/>
<rect x="1246" y="460" width="1" height="302" fill="#3c3cf0"/>
<rect x="1254" y="489" width="8" height="273" fill="#5050fa"/>
<rect x="1254" y="489" width="1" height="273" fill="#3c3cf0"/>
<rect x="1262" y="505" width="7" height="257" fill="#5050fa"/>
<rect x="1262" y="505" width="1" height="257" fill="#3c3cf0"/>
<rect x="1269" y="511" width="8" height="251" fill="#5050fa"/>
<rect x="1269" y="511" width="1" height="251" fill="#3c3cf0"/>
<rect x="1277" y="510" width="8" height="252" fill="#5050fa"/>
<rect x="1277" y="510" width="1" height="252" fill="#3c3cf0"/>
<rect x="1285" y="489" width="7" height="273" fill="#5050fa"/>
<rect x="1285" y="489" width="1" height="273" fill="#3c3cf0"/>
<rect x="1292" y="486" width="8" height="276" fill="#5050fa"/>
<rect x="1292" y="486" width="1" height="276" fill="#3c3cf0"/>
<rect x="1300" y="490" width="8" height="272" fill="#5050fa"/>
<rect x="1300" y="490" width="1" height="272" fill="#3c3cf0"/>
<rect x="1308" y="503" width="7" height="259" fill="#5050fa"/>
<rect x="1308" y="503" width="1" height="259" fill="#3c3cf0"/>
<rect x="1315" y="511" width="8" height="251" fill="#5050fa"/>
<rect x="1315" y="511" width="1" height="251" fill="#3c3cf0"/>
<rect x="1323" y="518" width="8" height="244" fill="#5050fa"/>
<rect x="1323" y="518" width="1" height="244" fill="#3c3cf0"/>
<rect x="1331" y="518" width="7" height="244" fill="#5050fa"/>
<rect x="1331" y="518" width="1" height="244" fill="#3c3cf0"/>
<rect x="72" y="176" width="12" height="586" fill="#5050fa"/>
<rect x="72" y="136" width="12" height="2" fill="#5050fa"/>
</svg>
<div class="a" style="left:71px;top:115px;width:39px;text-align:right;color:#e8e8e8;font-weight:bold;font-size:10.5px;line-height:11px">dB SPL</div>
<div class="yl" style="top:105.5px">130</div>
<div class="yl" style="top:142.3px">125</div>
<div class="yl" style="top:183.1px">120</div>
<div class="yl" style="top:223.9px">115</div>
<div class="yl" style="top:264.7px">110</div>
<div class="yl" style="top:305.5px">105</div>
<div class="yl" style="top:346.3px">100</div>
<div class="yl" style="top:387.1px">95</div>
<div class="yl" style="top:427.9px">90</div>
<div class="yl" style="top:468.7px">85</div>
<div class="yl" style="top:509.5px">80</div>
<div class="yl" style="top:550.3px">75</div>
<div class="yl" style="top:591.1px">70</div>
<div class="yl" style="top:631.9px">65</div>
<div class="yl" style="top:672.7px">60</div>
<div class="yl" style="top:713.5px">55</div>
<div class="yl" style="top:754.3px">50</div>
<div class="xl" style="left:79.7px">200</div>
<div class="xl" style="left:323.7px">500</div>
<div class="xl" style="left:508.3px">1kHz</div>
<div class="xl" style="left:692.9px">2k</div>
<div class="xl" style="left:936.9px">5k</div>
<div class="xl" style="left:1121.5px">10k</div>
<div class="xl" style="left:1306px">20k</div>
<div class="a" style="left:112px;top:108px;width:107px;height:90px;background:#000"></div>
<div class="a" style="left:450px;top:108px;width:100px;height:59px;background:#000"></div>
<div class="big" style="left:115.5px;top:108px">736.87</div>
<div class="sm" style="left:220px;top:108px">Input Level<br>mV rms</div>
<div class="big" style="left:115.5px;top:139px">126.40</div>
<div class="sm" style="left:220px;top:139px">Input Level<br>dB SPL pk</div>
<div class="big" style="left:115.5px;top:170px">121.40</div>
<div class="sm" style="left:220px;top:170px">Input Level<br>dB SPL avg</div>
<div class="big" style="left:453px;top:108px">1.7786</div>
<div class="sm" style="left:550px;top:108px">Crest Factor<br>mV/mV</div>
<div class="big" style="left:453px;top:139px">5.0014</div>
<div class="sm" style="left:550px;top:139px">Crest Factor<br>dB</div>
<div class="a" style="left:1245px;top:108px;width:92px;height:23px;background:#000"></div>
<div class="a" style="left:1248px;top:106px;font-family:'Liberation Serif',serif;font-size:22px;color:#e0e0e0;line-height:26px;letter-spacing:-0.3px">True</div>
<div class="a" style="left:1288px;top:106px;font-family:'Liberation Sans',sans-serif;font-weight:bold;font-style:italic;color:#e8163c;font-size:22px;line-height:26px;letter-spacing:0.3px">RTA</div>
<div class="a" style="left:6px;top:107px;font-size:10.3px">- Generator -</div>
<div class="a" style="left:31px;top:119px;width:8px;height:8px;border-radius:50%;background:#7a0a0a"></div>
<div class="a" style="left:3px;top:131px;width:63px;height:26px;border:1px solid #000;box-shadow:inset 1px 1px 0 #fff,inset -1px -1px 0 #606060,inset -2px -2px 0 #a0a0a0;background:#f2f2f2;text-align:center;font-size:11px;line-height:23px">On/Off</div>
<div class="grp" style="left:3px;top:163px;width:62px;height:47px"></div><div class="glab" style="left:11px;top:157px">Freq.</div>
<div class="edit" style="left:7px;top:173px;width:38px;height:19px;text-align:right">32</div>
<div class="b" style="left:46px;top:170px;width:17px;height:12px;border-width:1px 2px 2px 1px"><svg style="position:absolute;left:4px;top:4px" width="7" height="4"><path d="M0,4 L3.5,0 L7,4Z" fill="#000"/></svg></div><div class="b" style="left:46px;top:182px;width:17px;height:13px;border-width:1px 2px 2px 1px"><svg style="position:absolute;left:4px;top:4px" width="7" height="4"><path d="M0,0 L3.5,4 L7,0Z" fill="#000"/></svg></div>
<div class="a" style="left:11px;top:196px;font-size:10.3px">(in Hz)</div>
<div class="grp" style="left:3px;top:218px;width:62px;height:49px"></div><div class="glab" style="left:11px;top:212px">Ampl.</div>
<div class="edit" style="left:7px;top:228px;width:38px;height:19px;text-align:right">-10.0</div>
<div class="b" style="left:46px;top:225px;width:17px;height:12px;border-width:1px 2px 2px 1px"><svg style="position:absolute;left:4px;top:4px" width="7" height="4"><path d="M0,4 L3.5,0 L7,4Z" fill="#000"/></svg></div><div class="b" style="left:46px;top:237px;width:17px;height:13px;border-width:1px 2px 2px 1px"><svg style="position:absolute;left:4px;top:4px" width="7" height="4"><path d="M0,0 L3.5,4 L7,0Z" fill="#000"/></svg></div>
<div class="a" style="left:7px;top:250px;font-size:10.3px">(in dBu)</div>
<div class="grp" style="left:3px;top:274px;width:62px;height:124px"></div><div class="glab" style="left:11px;top:268px">Wave</div>
<div class="wb d" style="top:282px">Sine</div>
<div class="wb" style="top:298px">Square</div>
<div class="wb" style="top:314px">Triangle</div>
<div class="wb" style="top:330px">Saw</div>
<div class="wb" style="top:347px">Impulse</div>
<div class="wb" style="top:363px">Pink N</div>
<div class="wb" style="top:379px">White N</div>
<div class="a" style="left:6px;top:400px;width:59px;height:33px;background:#f2f2f2;border-top:1px solid #fff;border-left:1px solid #fff;border-right:2px solid #606060;border-bottom:2px solid #606060;box-shadow:inset -1px -1px 0 #a0a0a0;text-align:center;font-size:11px;line-height:14px;padding-top:1px">Quick<br>Sweep</div>
<div class="vl" style="left:68px;top:104px;height:672px;background:#a0a0a0"></div>
<div class="vl" style="left:69px;top:104px;height:672px;background:#fff"></div>
<div class="hl" style="left:0;top:434px;width:66px;background:#a0a0a0"></div>
<div class="hl" style="left:0;top:435px;width:66px;background:#fff"></div>
<div class="a" style="left:1369px;top:107px;font-size:10.3px">- Analyzer -</div>
<div class="grp" style="left:1354px;top:128px;width:82px;height:36px"></div><div class="glab" style="left:1362px;top:122px">dB Top</div><div class="b" style="left:1356px;top:137px;width:15px;height:12px;border-width:1px 2px 2px 1px"><svg style="position:absolute;left:3px;top:4px" width="7" height="4"><path d="M0,4 L3.5,0 L7,4Z" fill="#000"/></svg></div><div class="b" style="left:1356px;top:149px;width:15px;height:12px;border-width:1px 2px 2px 1px"><svg style="position:absolute;left:3px;top:4px" width="7" height="4"><path d="M0,0 L3.5,4 L7,0Z" fill="#000"/></svg></div><div class="edit" style="left:1370px;top:138px;width:64px;height:23px;line-height:21px;padding-left:2px">130 dB SPL</div>
<div class="grp" style="left:1354px;top:175px;width:82px;height:36px"></div><div class="glab" style="left:1362px;top:169px">dB Bottom</div><div class="b" style="left:1356px;top:184px;width:15px;height:12px;border-width:1px 2px 2px 1px"><svg style="position:absolute;left:3px;top:4px" width="7" height="4"><path d="M0,4 L3.5,0 L7,4Z" fill="#000"/></svg></div><div class="b" style="left:1356px;top:196px;width:15px;height:12px;border-width:1px 2px 2px 1px"><svg style="position:absolute;left:3px;top:4px" width="7" height="4"><path d="M0,0 L3.5,4 L7,0Z" fill="#000"/></svg></div><div class="edit" style="left:1370px;top:185px;width:64px;height:23px;line-height:21px;padding-left:2px">50 dB SPL</div>
<div class="grp" style="left:1354px;top:230px;width:82px;height:35px"></div><div class="glab" style="left:1362px;top:224px">Hi Freq Limit</div><div class="b" style="left:1356px;top:239px;width:15px;height:12px;border-width:1px 2px 2px 1px"><svg style="position:absolute;left:3px;top:4px" width="7" height="4"><path d="M0,4 L3.5,0 L7,4Z" fill="#000"/></svg></div><div class="b" style="left:1356px;top:251px;width:15px;height:12px;border-width:1px 2px 2px 1px"><svg style="position:absolute;left:3px;top:4px" width="7" height="4"><path d="M0,0 L3.5,4 L7,0Z" fill="#000"/></svg></div><div class="edit" style="left:1370px;top:240px;width:64px;height:23px;line-height:21px;padding-left:2px">20 kHz</div>
<div class="grp" style="left:1354px;top:276px;width:82px;height:35px"></div><div class="glab" style="left:1362px;top:270px">Lo Freq Limit</div><div class="b" style="left:1356px;top:285px;width:15px;height:12px;border-width:1px 2px 2px 1px"><svg style="position:absolute;left:3px;top:4px" width="7" height="4"><path d="M0,4 L3.5,0 L7,4Z" fill="#000"/></svg></div><div class="b" style="left:1356px;top:297px;width:15px;height:12px;border-width:1px 2px 2px 1px"><svg style="position:absolute;left:3px;top:4px" width="7" height="4"><path d="M0,0 L3.5,4 L7,0Z" fill="#000"/></svg></div><div class="edit" style="left:1370px;top:286px;width:64px;height:23px;line-height:21px;padding-left:2px">200 Hz</div>
<div class="a" style="left:1354px;top:321px;font-size:11px">RTA Resolution:</div>
<div class="edit" style="left:1354px;top:336px;width:82px;height:19px;line-height:16px;padding-left:2px">1/24 Oct.</div><div class="b" style="left:1418px;top:338px;width:16px;height:15px;border-width:1px 2px 2px 1px"><svg style="position:absolute;left:3px;top:4px" width="9" height="5"><path d="M0,0 L9,0 L4.5,5Z" fill="#000"/></svg></div>
<div class="a" style="left:1354px;top:360px;font-size:11px">Speed Tradeoff:</div>
<div class="edit" style="left:1354px;top:375px;width:82px;height:19px;line-height:16px;padding-left:2px">80 Hz (fast)</div><div class="b" style="left:1418px;top:377px;width:16px;height:15px;border-width:1px 2px 2px 1px"><svg style="position:absolute;left:3px;top:4px" width="9" height="5"><path d="M0,0 L9,0 L4.5,5Z" fill="#000"/></svg></div>
<div class="a" style="left:1354px;top:399px;font-size:11px">Averages:</div>
<div class="edit" style="left:1354px;top:412px;width:82px;height:19px;line-height:16px;text-align:right;padding-right:3px">5</div>
<div class="hl" style="left:1352px;top:436px;width:88px;background:#a0a0a0"></div>
<div class="hl" style="left:1352px;top:437px;width:88px;background:#fff"></div>
<div class="hl" style="left:0;top:776px;width:70px;background:#a8a8a8"></div>
<div class="hl" style="left:1349px;top:776px;width:91px;background:#a8a8a8"></div>
<div class="a" style="left:69px;top:776px;width:630px;height:68px;background:#fff"></div>
<div class="a" style="left:699px;top:776px;width:13px;height:68px;background:#f6f6f6"></div>
<div class="vl" style="left:712px;top:777px;height:67px;background:#909090"></div>
<div class="hl" style="left:0;top:844px;width:1440px;background:#a8a8a8"></div>
<div class="hl" style="left:0;top:845px;width:1440px;background:#fff"></div>
<div class="note" style="left:33px;top:779px">Notes:</div>
<div class="note" style="left:69px;top:779px">.1. Project Filename: Untitled Project</div>
<div class="note" style="left:69px;top:792px">.2. Mic Cal File: Mic Correction was OFF</div>
<div class="note" style="left:69px;top:805px">.3. House Curve File: House Curve was OFF</div>
<div class="note" style="left:69px;top:818px">.4. Data was acquired manually</div>
<div class="note" style="left:69px;top:831px">.5. Sound System Correction: OFF</div>
<div class="note" style="left:261px;top:779px">Data acquired: 25Aug2011, 9:15 PM</div>
<div class="note" style="left:309px;top:792px">Input f(s) = 44.1 kHz</div>
<div class="note" style="left:357px;top:805px">FFT Size = 16 k</div>
<div class="note" style="left:309px;top:818px">Input Selection: L</div>
<div class="note" style="left:309px;top:831px">Relative Mode:&nbsp; OFF</div>
<div class="note" style="left:453px;top:792px">Output f(s) = 44.1 kHz</div>
<div class="note" style="left:453px;top:818px">No. of Averages = 5</div>
<div class="note" style="left:453px;top:831px">Peak Hold: OFF</div>
<div class="note" style="left:2px;top:850px;font-size:11px">The analyzer is stopped...press Alt+Space to start.</div>
<div class="a" style="left:1175px;top:848px;width:154px;height:16px;border-top:1px solid #a0a0a0;border-left:1px solid #a0a0a0;font-size:10.5px;line-height:15px;padding-left:1px">Workbench</div>
<div class="a" style="left:1333px;top:848px;width:24px;height:16px;border-top:1px solid #a0a0a0;border-left:1px solid #a0a0a0;font-size:10.5px;line-height:15px;padding-left:1px"></div>
<div class="a" style="left:1360px;top:848px;width:27px;height:16px;border-top:1px solid #a0a0a0;border-left:1px solid #a0a0a0;font-size:10.5px;line-height:15px;padding-left:1px">NUM</div>
<div class="a" style="left:1390px;top:848px;width:30px;height:16px;border-top:1px solid #a0a0a0;border-left:1px solid #a0a0a0;font-size:10.5px;line-height:15px;padding-left:1px"></div>
<svg class="a" style="left:1426px;top:850px" width="13" height="13"><path d="M12,2 L2,12 M12,6 L6,12 M12,10 L10,12" stroke="#909090" stroke-width="1.2"/></svg>
<div class="a" id="task"></div>
<div class="a" style="left:0;top:898px;width:1440px;height:2px;background:#fff"></div>
<div class="a" style="left:6px;top:866px;width:36px;height:34px;overflow:hidden"><div style="position:absolute;left:0;top:1px;width:36px;height:36px;border-radius:50%;background:#0a1a40"></div><div style="position:absolute;left:3px;top:4px;width:30px;height:30px;border-radius:50%;background:linear-gradient(#a8d0e0 0%,#70a8c8 35%,#3a80b0 55%,#2a6aa0 100%)"></div></div>
<svg class="a" style="left:14px;top:873px" width="20" height="20"><path d="M2,4 Q6,2 9,4 L8,9 Q5,7 1,9Z" fill="#f05020"/><path d="M10,4 Q14,6 18,4 L17,9 Q13,11 9,9Z" fill="#60c020"/><path d="M1,10 Q5,8 8,10 L7,15 Q4,13 0,15Z" fill="#2090f0"/><path d="M9,10 Q13,12 17,10 L16,15 Q12,17 8,15Z" fill="#f0c010"/></svg>
<div class="a" style="left:60px;top:871px;width:3px;height:22px;background:repeating-linear-gradient(#8aa0d8 0 2px,transparent 2px 4px);opacity:.7"></div>
<div class="a" style="left:287px;top:871px;width:3px;height:22px;background:repeating-linear-gradient(#8aa0d8 0 2px,transparent 2px 4px);opacity:.7"></div>
<div class="a" style="left:1293px;top:871px;width:3px;height:22px;background:repeating-linear-gradient(#8aa0d8 0 2px,transparent 2px 4px);opacity:.7"></div>
<svg class="a" style="left:70px;top:874px" width="16" height="16"><rect x="1" y="3" width="15" height="10" fill="#6c9ce0" stroke="#c0d0f0"/><rect x="5" y="13" width="7" height="2" fill="#a0b0d0"/></svg>
<svg class="a" style="left:94px;top:874px" width="16" height="16"><circle cx="8" cy="8" r="6" fill="none" stroke="#3aa0f0" stroke-width="3"/><path d="M2,9 L14,9" stroke="#3aa0f0" stroke-width="2"/><path d="M0,12 Q8,-2 16,2" stroke="#f0c040" stroke-width="1.5" fill="none"/></svg>
<svg class="a" style="left:116px;top:874px" width="16" height="16"><rect x="3" y="4" width="11" height="8" fill="#f0d020"/><path d="M1,3 L8,0 L15,4" fill="#d02020"/><rect x="2" y="10" width="13" height="5" fill="#d02020"/></svg>
<svg class="a" style="left:140px;top:874px" width="16" height="16"><circle cx="8" cy="8" r="7" fill="#e04040"/><circle cx="8" cy="9" r="4" fill="#f0f0f0"/></svg>
<svg class="a" style="left:163px;top:874px" width="16" height="16"><rect x="1" y="2" width="15" height="13" fill="#a0d0f0" stroke="#e0f0ff"/><path d="M1,15 L6,8 L9,11 L12,7 L16,15Z" fill="#60a0d0"/></svg>
<svg class="a" style="left:186px;top:874px" width="16" height="16"><circle cx="8" cy="8" r="7" fill="#e0b020" stroke="#604010"/><path d="M5,11 L8,4 L11,11Z" fill="#c02010"/></svg>
<svg class="a" style="left:209px;top:874px" width="16" height="16"><rect x="3" y="1" width="10" height="14" rx="3" fill="#e0d040"/><circle cx="8" cy="6" r="2" fill="#506010"/></svg>
<svg class="a" style="left:232px;top:874px" width="16" height="16"><ellipse cx="8" cy="8" rx="6" ry="7" fill="none" stroke="#e01010" stroke-width="3.5"/></svg>
<svg class="a" style="left:255px;top:874px" width="16" height="16"><circle cx="8" cy="8" r="7" fill="#e03020"/><path d="M8,8 L1.9,11.5 A7,7 0 0,0 14.1,11.5Z" fill="#30a030"/><path d="M8,8 L14.1,11.5 A7,7 0 0,0 8,1Z" fill="#f0c020"/><circle cx="8" cy="8" r="3.2" fill="#3070e0" stroke="#fff" stroke-width="1.2"/></svg>
<div class="a" style="left:10px;top:881px;font-family:'Liberation Mono',monospace;font-size:10px;line-height:10px;color:rgba(170,190,230,0.6);transform:scaleY(1.3);transform-origin:left top">MAGNITOLA[.ORG] [.RU] [.NET]</div>
<div class="a" style="left:775px;top:871px;width:158px;height:26px;background:linear-gradient(#2e4cae,#243f9e 60%,#1e3890);border-radius:2px;box-shadow:inset 1px 1px 0 #1a2c78"></div>
<svg class="a" style="left:305px;top:874px" width="15" height="16"><ellipse cx="7.5" cy="8" rx="5" ry="6.5" fill="none" stroke="#e01010" stroke-width="3"/></svg>
<div class="tt" style="left:324px">Тест. 3-дюймовые ...</div>
<svg class="a" style="left:463px;top:874px" width="16" height="16"><rect x="2" y="1" width="13" height="10" fill="#2040c0" stroke="#d0d0d0"/><rect x="4" y="12" width="9" height="3" fill="#c0c0c0"/></svg>
<div class="tt" style="left:484px">Мой компьютер</div>
<svg class="a" style="left:624px;top:874px" width="14" height="16"><path d="M1,2 L9,0 L13,3 L13,15 L1,15Z" fill="#e8c850"/><path d="M1,2 L6,4 L6,16 L1,15Z" fill="#c8a030"/></svg>
<div class="tt" style="left:644px">C:\Documents and ...</div>
<div class="a" style="left:785px;top:876px;width:16px;height:16px;background:#000;border:1px solid #aaa"><div style="position:absolute;left:6px;top:0;width:1px;height:14px;background:#666"></div><div style="position:absolute;left:0;top:6px;width:14px;height:1px;background:#666"></div><svg style="position:absolute;left:0;top:0" width="13" height="13"><path d="M0,8 C3,1 5,1 7,6 S10,11 13,6" stroke="#40e0e0" stroke-width="1.4" fill="none"/></svg></div>
<div class="tt" style="left:805px">Untitled Project - Tru...</div>
<svg class="a" style="left:945px;top:874px" width="16" height="16"><rect x="1" y="1" width="14" height="13" fill="#3070c0" stroke="#80c080"/><path d="M2,10 L5,6 L8,9 L11,4 L14,8" stroke="#80f0f0" fill="none"/></svg>
<div class="tt" style="left:965px">Live1 - SIA SmaartLi...</div>
<div class="tt" style="left:1303px;top:878px;font-size:11px">EN</div>
<svg class="a" style="left:1325px;top:878px" width="10" height="10"><path d="M8,1 L3,5 L8,9" stroke="#fff" stroke-width="2" fill="none"/></svg>
<svg class="a" style="left:1340px;top:874px" width="17" height="17"><circle cx="8.5" cy="8.5" r="8" fill="#30a030" stroke="#e0f0e0"/><path d="M5,4 L5,10 Q8.5,14 12,10 L12,4" stroke="#fff" stroke-width="2.2" fill="none"/></svg>
<svg class="a" style="left:1358px;top:874px" width="17" height="16"><rect x="6" y="1" width="10" height="8" fill="#3070e0" stroke="#c0d0f0"/><rect x="1" y="5" width="10" height="8" fill="#2050c0" stroke="#c0d0f0"/></svg>
<svg class="a" style="left:1375px;top:874px" width="17" height="16"><rect x="6" y="1" width="10" height="8" fill="#3070e0" stroke="#c0d0f0"/><rect x="1" y="5" width="10" height="8" fill="#2050c0" stroke="#c0d0f0"/></svg>
<div class="tt" style="left:1401px;top:876px;font-size:12px">21:17</div>
</body></html>
